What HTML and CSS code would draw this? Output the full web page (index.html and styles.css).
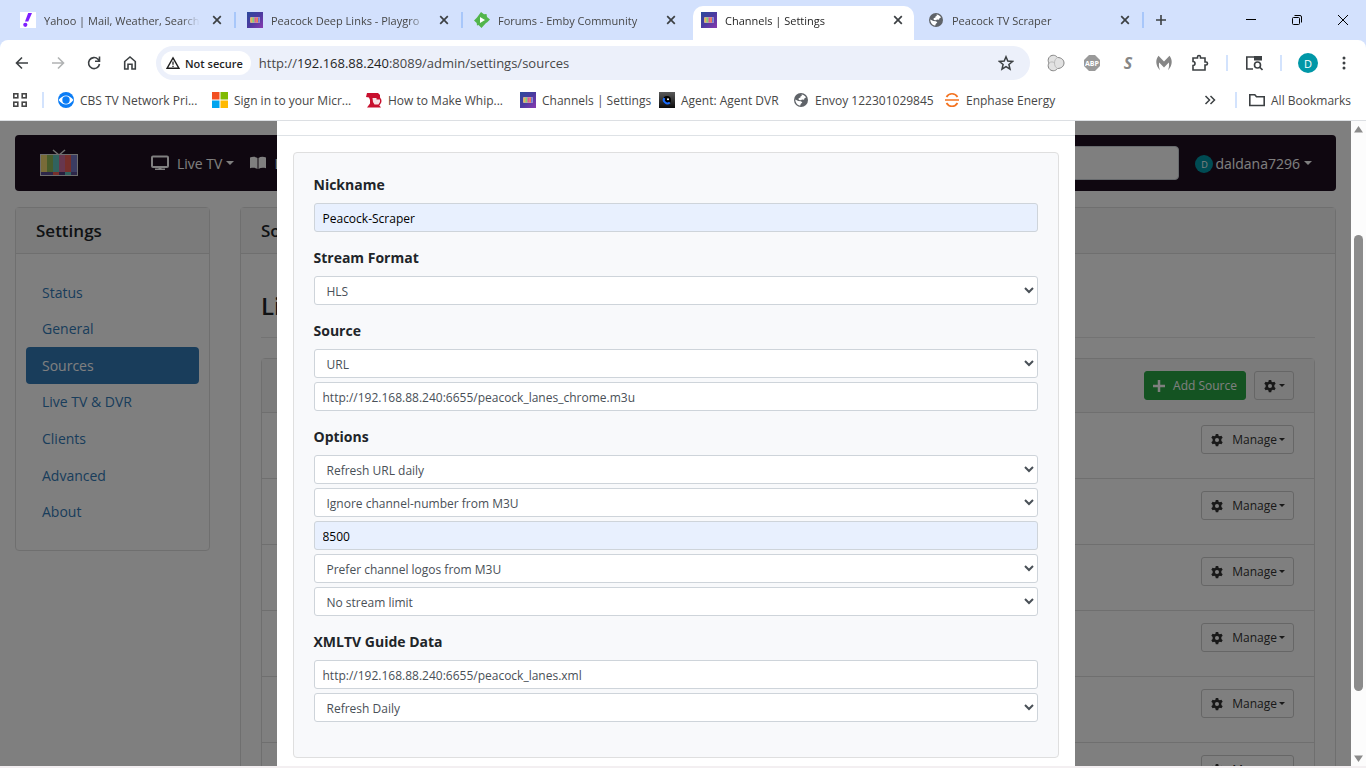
FILE: index.html
```html
<!DOCTYPE html>
<html lang="en">
<head>
    <meta charset="UTF-8">
    <meta name="viewport" content="width=device-width, initial-scale=1.0">
    <title>Channels | Settings</title>
    <link rel="stylesheet" href="styles.css">
</head>
<body>
    <!-- shared icons -->
    <svg class="defs" width="0" height="0">
        <defs>
            <linearGradient id="purple" x1="0" y1="0" x2="1" y2="1">
                <stop offset="0" stop-color="#2b4a9c"/>
                <stop offset="0.5" stop-color="#4b3aa0"/>
                <stop offset="1" stop-color="#8a3ab0"/>
            </linearGradient>
            <linearGradient id="dark" x1="0" y1="0" x2="0" y2="1">
                <stop offset="0" stop-color="#5a5a5a"/>
                <stop offset="1" stop-color="#0c0c0c"/>
            </linearGradient>
        </defs>
        <symbol id="channels" viewBox="0 0 16 16">
            <rect width="16" height="16" fill="url(#purple)"/>
            <rect x="3" y="5" width="10" height="6" rx="1" fill="#b9a3c9"/>
            <path d="M3.500 5.500h2v5h-2z" fill="#e8b84a"/>
            <path d="M5.500 5.500h2v5h-2z" fill="#7fd07a"/>
            <path d="M7.500 5.500h2v5h-2z" fill="#e05a90"/>
            <path d="M9.500 5.500h1.500v5h-1.500z" fill="#f07a50"/>
            <path d="M11 5.500h1.500v5h-1.500z" fill="#6a78d8"/>
        </symbol>
        <symbol id="globe" viewBox="0 0 16 16">
            <circle cx="8" cy="8" r="7" fill="#5f6368"/>
            <path d="M8.500 2.500c2 .2 3.600 1.300 4.500 3l-1.500.8-.5 1.500-2-.4-1 .8-2.200-.3-.2-1.700 1.800-.7.200-1.200 1.200-.4zM2.300 7.500l3 1.500 2.700.2 1.300 1.300-1.600 1.400-.4 1.700c-2.800-.3-5-2.900-5-6.100z" fill="#fff"/>
        </symbol>
        <symbol id="x" viewBox="0 0 10 10">
            <path d="M1.200 1.200l7.600 7.600M8.800 1.200L1.200 8.800" stroke="currentColor" stroke-width="1.700"/>
        </symbol>
        <symbol id="gear" viewBox="0 0 16 16">
            <path fill="currentColor" fill-rule="evenodd" d="M6.600 1h2.800l.4 2 1.400.8 1.900-.7 1.400 2.400-1.500 1.300v2.400l1.500 1.300-1.400 2.400-1.900-.7-1.400.8-.4 2H6.600l-.4-2-1.400-.8-1.900.7-1.400-2.400L3 9.200V6.800L1.500 5.500l1.400-2.400 1.900.7L6.200 3zM8 5.700a2.300 2.300 0 1 0 0 4.600 2.300 2.300 0 0 0 0-4.600z"/>
        </symbol>
    </svg>

    <header class="browser">
        <div class="tabs">
            <div class="tab">
                <svg class="icon" viewBox="0 0 16 16"><rect width="16" height="16" fill="#fff"/><path d="M8.200 1H12L8.300 9.500H5z" fill="#7e1fff"/><circle cx="5.300" cy="12.800" r="2.100" fill="#7e1fff"/></svg>
                <span class="title">Yahoo | Mail, Weather, Search</span>
                <button class="close" aria-label="Close tab"><svg><use href="#x"/></svg></button>
            </div>
            <div class="tab">
                <svg class="icon"><use href="#channels"/></svg>
                <span class="title">Peacock Deep Links - Playgro</span>
                <button class="close" aria-label="Close tab"><svg><use href="#x"/></svg></button>
            </div>
            <div class="tab no-line">
                <svg class="icon" viewBox="0 0 16 16"><path d="M7 0l3 2.200L12.500 2 13 5l3 2.500-3 3-1 .5-4.500 5-3-3L3 13.500 2.700 11 0 8.500l3-3z" fill="#52b54b"/><path d="M6 5v6l5-3z" fill="#fff"/></svg>
                <span class="title">Forums - Emby Community</span>
                <button class="close" aria-label="Close tab"><svg><use href="#x"/></svg></button>
            </div>
            <div class="tab active no-line">
                <svg class="icon"><use href="#channels"/></svg>
                <span class="title">Channels | Settings</span>
                <button class="close" aria-label="Close tab"><svg><use href="#x"/></svg></button>
            </div>
            <div class="tab">
                <svg class="icon"><use href="#globe"/></svg>
                <span class="title">Peacock TV Scraper</span>
                <button class="close" aria-label="Close tab"><svg><use href="#x"/></svg></button>
            </div>
            <button class="new-tab" aria-label="New tab"><svg width="12" height="12" viewBox="0 0 12 12"><path d="M6 1v10M1 6h10" stroke="#3c4043" stroke-width="1.600"/></svg></button>
            <div class="window-buttons">
                <button aria-label="Minimize"><svg width="10" height="10" viewBox="0 0 10 10"><path d="M0 4.500h10" stroke="#000"/></svg></button>
                <button aria-label="Restore"><svg width="10" height="10" viewBox="0 0 10 10"><g fill="none" stroke="#000"><rect x=".5" y="2.500" width="7" height="7" rx="1"/><path d="M2.500.5H8A1.500 1.500 0 0 1 9.500 2v5.500"/></g></svg></button>
                <button aria-label="Close"><svg width="10" height="10" viewBox="0 0 10 10"><path d="M0 0l10 10M10 0L0 10" stroke="#000"/></svg></button>
            </div>
        </div>

        <div class="toolbar">
            <button aria-label="Back"><svg width="16" height="16" viewBox="0 0 16 16"><path d="M14 8H3M8 2.500L2.500 8 8 13.500" class="line"/></svg></button>
            <button class="faded" aria-label="Forward"><svg width="16" height="16" viewBox="0 0 16 16"><path d="M2 8h11M8 2.500L13.500 8 8 13.500" class="line"/></svg></button>
            <button aria-label="Reload"><svg width="16" height="16" viewBox="0 0 16 16"><path d="M13.500 9A5.500 5.500 0 1 1 12 4.200l1.500 1.500M13.500 1.500v4.700H9" class="line"/></svg></button>
            <button aria-label="Home"><svg width="16" height="16" viewBox="0 0 16 16"><path d="M2.700 6.500L8 2l5.300 4.500V14H10V9.300H6V14H2.700z" class="line"/></svg></button>
            <div class="address">
                <span class="chip"><svg width="14" height="14" viewBox="0 0 14 14"><path d="M7 1.800L13 12.300H1z" fill="none" stroke="#1f1f1f" stroke-width="1.400"/><path d="M7 5.500v3.300M7 9.700v1.400" stroke="#1f1f1f" stroke-width="1.300"/></svg>Not secure</span>
                <span class="url">http://<b>192.168.88.240</b>:8089/admin/settings/sources</span>
                <button class="star" aria-label="Bookmark this tab"><svg width="16" height="16" viewBox="0 0 16 16"><path d="M8 1.800l1.800 4.300 4.700.4-3.600 3 1.100 4.600L8 11.600l-4 2.500 1.100-4.600-3.600-3 4.700-.4z" fill="none" stroke="#3c4043" stroke-width="1.500"/></svg></button>
            </div>
            <button aria-label="Extension"><svg width="18" height="18" viewBox="0 0 18 18"><path d="M2 3.500C4 .5 8.500.5 10.500 3.500c4 0 6.500 2.500 6.500 5.500s-2.500 5.500-6.500 5.500C8.500 17.500 4 17.500 2 14.500.8 12.500 1 10.500 2 9 1 7.500.8 5.500 2 3.500z" fill="#e2e2e2" stroke="#858585"/><path d="M2 9c2-1.500 4-1.500 5.500 0M10.500 3.500C8.500 4.500 7.500 6.500 7.500 9s1 4.500 3 5.500" fill="none" stroke="#bbb"/></svg></button>
            <button aria-label="Adblock Plus"><svg width="16" height="16" viewBox="0 0 16 16"><path d="M5 0h6l5 5v6l-5 5H5l-5-5V5z" fill="#9a9a9a"/><text x="8" y="11" class="abp">ABP</text></svg></button>
            <button class="s-icon" aria-label="Extension">S</button>
            <button aria-label="Malwarebytes"><svg width="16" height="16" viewBox="0 0 16 16"><path d="M2.500.8L8 6.500 13.500.8C16.800 5 16.500 10.500 12 15.200c1.200-3 1.300-5.500.8-7.700L8 12.500 3.200 7.500c-.5 2.200-.4 4.700.8 7.700C-.5 10.500-.8 5 2.500.8z" fill="#868686"/></svg></button>
            <button aria-label="Extensions"><svg width="18" height="18" viewBox="0 0 18 18"><path d="M2 4h4.500V3a1.500 1.500 0 0 1 3 0v1H14v4h1a1.500 1.500 0 0 1 0 3h-1v5H2v-4.500a2 2 0 0 0 0-4z" class="line"/></svg></button>
            <span class="divider"></span>
            <button aria-label="Search tabs"><svg width="18" height="18" viewBox="0 0 18 18"><path d="M8 15H1.800V3H16" class="line"/><path d="M9 2h8v4.500H9z" fill="#3c4043"/><circle cx="12.500" cy="11" r="3" class="line"/><path d="M14.700 13.200L17.500 16" class="line"/></svg></button>
            <span class="divider"></span>
            <button aria-label="Profile"><span class="avatar">D</span></button>
            <button aria-label="Menu"><svg width="4" height="14" viewBox="0 0 4 14"><g fill="#3c4043"><circle cx="2" cy="2" r="1.500"/><circle cx="2" cy="7" r="1.500"/><circle cx="2" cy="12" r="1.500"/></g></svg></button>
        </div>

        <nav class="bookmarks">
            <button class="apps" aria-label="Apps"><svg width="14" height="14" viewBox="0 0 14 14"><g fill="none" stroke="#474747" stroke-width="1.600"><rect x=".8" y=".8" width="4" height="4"/><rect x="9.200" y=".8" width="4" height="4"/><rect x=".8" y="9.200" width="4" height="4"/><rect x="9.200" y="9.200" width="4" height="4"/></g></svg></button>
            <div class="bookmark-list">
                <a href="#"><svg class="icon" viewBox="0 0 16 16"><circle cx="8" cy="8" r="8" fill="#0a7cf5"/><path d="M.5 8Q8-1 15.500 8 8 17 .5 8z" fill="#fff"/><circle cx="8" cy="8" r="3.700" fill="#0a7cf5"/></svg>CBS TV Network Pri...</a>
                <a href="#"><svg class="icon" viewBox="0 0 16 16"><path d="M0 0h7.500v7.500H0z" fill="#f25022"/><path d="M8.500 0H16v7.500H8.500z" fill="#7fba00"/><path d="M0 8.500h7.500V16H0z" fill="#00a4ef"/><path d="M8.500 8.500H16V16H8.500z" fill="#ffb900"/></svg>Sign in to your Micr...</a>
                <a href="#"><svg class="icon" viewBox="0 0 16 16"><path d="M1 1h11l2 2v3l-2 1.500v4l3 4H1l3-4V8L3 5.500 0 5z" fill="#c8102e"/><circle cx="11" cy="9" r="4.500" fill="#c8102e"/><path d="M6.500 6h4v1.500h3.500v2.500l-1.500 2.500h-4L7 10z" fill="#f7e1e4"/></svg>How to Make Whip...</a>
                <a href="#"><svg class="icon"><use href="#channels"/></svg>Channels | Settings</a>
                <a href="#"><svg class="icon" viewBox="0 0 16 16"><rect width="16" height="16" fill="url(#dark)"/><circle cx="8" cy="8" r="4" fill="#000"/><path d="M5.300 6a3.600 3.600 0 0 0 5.500 4.500" fill="none" stroke="#1a6dff" stroke-width="2"/><circle cx="9" cy="7.300" r="1" fill="#fff"/></svg>Agent: Agent DVR</a>
                <a href="#"><svg class="icon"><use href="#globe"/></svg>Envoy 122301029845</a>
                <a href="#"><svg class="icon" viewBox="0 0 16 16"><path d="M2.500 5a6.300 6.300 0 0 1 11 0M2.500 11a6.300 6.300 0 0 0 11 0M1 8h14" fill="none" stroke="#f37321" stroke-width="1.700"/></svg>Enphase Energy</a>
            </div>
            <button class="more" aria-label="More bookmarks"><svg width="12" height="10" viewBox="0 0 12 10"><path d="M1.500 1l4 4-4 4M6.500 1l4 4-4 4" fill="none" stroke="#3c4043" stroke-width="1.500"/></svg></button>
            <a class="all" href="#"><svg class="icon" viewBox="0 0 16 16"><path d="M.8 2.800h5l1.700 2h7.700v8.700H.8z" class="line"/></svg>All Bookmarks</a>
        </nav>
    </header>

    <div class="viewport">
        <div class="page">
            <nav class="navbar">
                <svg class="logo" width="40" height="28" viewBox="0 0 40 28">
                    <path d="M14 1l6 5 6-5" fill="none" stroke="#ddd" stroke-width="1.500"/>
                    <rect x="1" y="5" width="38" height="22" fill="#ddd"/>
                    <path d="M2 6h6v17H2z" fill="#f1d671"/><path d="M8 6h6v17H8z" fill="#8fb857"/><path d="M14 6h6v17h-6z" fill="#62c4bd"/><path d="M20 6h6v17h-6z" fill="#cf6f9c"/><path d="M26 6h6v17h-6z" fill="#ed5f55"/><path d="M32 6h6v17h-6z" fill="#7678c4"/>
                    <path d="M2 23h12v3H2z" fill="#5b4f93"/><path d="M14 23h6v3h-6z" fill="#ed5f55"/><path d="M20 23h6v3h-6z" fill="#4c3d7d"/><path d="M26 23h6v3h-6z" fill="#62c4bd"/><path d="M32 23h6v3h-6z" fill="#5b4f93"/>
                </svg>
                <a href="#" class="live"><svg width="18" height="16" viewBox="0 0 18 16"><rect x="1" y="1.500" width="16" height="10.500" rx="1" fill="none" stroke="currentColor" stroke-width="2"/><path d="M7.500 12h3v1.500h3.500v1.500H4v-1.500h3.500z" fill="currentColor"/></svg><span class="caret">Live TV</span></a>
                <a href="#"><svg width="16" height="14" viewBox="1 0 16 14"><path d="M1 1.500C4 .5 6.500.7 8.500 2v11c-2-1.200-4.500-1.500-7.500-.7zM17 1.500C14 .5 11.500.7 9.500 2v11c2-1.200 4.500-1.500 7.500-.7z" fill="currentColor"/></svg><span class="caret">Library</span></a>
                <input class="search" type="text" aria-label="Search">
                <a href="#" class="user"><span class="avatar">D</span><span class="caret">daldana7296</span></a>
            </nav>

            <div class="columns">
                <aside class="card">
                    <h2 class="card-header">Settings</h2>
                    <nav class="menu">
                        <a href="#">Status</a>
                        <a href="#">General</a>
                        <a href="#" class="selected">Sources</a>
                        <a href="#">Live TV &amp; DVR</a>
                        <a href="#">Clients</a>
                        <a href="#">Advanced</a>
                        <a href="#">About</a>
                    </nav>
                </aside>
                <main class="card">
                    <h2 class="card-header">Sources</h2>
                    <div class="content">
                        <h3>Live TV Sources</h3>
                        <div class="card">
                            <div class="row row-header">
                                <button class="btn btn-add"><svg width="12" height="12" viewBox="0 0 12 12"><path d="M6 0v12M0 6h12" stroke="currentColor" stroke-width="2.500"/></svg>Add Source</button>
                                <button class="btn btn-small" aria-label="Source options"><svg width="14" height="14"><use href="#gear"/></svg><span class="caret"></span></button>
                            </div>
                            <div class="row"><button class="btn"><svg width="14" height="14"><use href="#gear"/></svg><span class="caret">Manage</span></button></div>
                            <div class="row"><button class="btn"><svg width="14" height="14"><use href="#gear"/></svg><span class="caret">Manage</span></button></div>
                            <div class="row"><button class="btn"><svg width="14" height="14"><use href="#gear"/></svg><span class="caret">Manage</span></button></div>
                            <div class="row"><button class="btn"><svg width="14" height="14"><use href="#gear"/></svg><span class="caret">Manage</span></button></div>
                            <div class="row"><button class="btn"><svg width="14" height="14"><use href="#gear"/></svg><span class="caret">Manage</span></button></div>
                            <div class="row"><button class="btn"><svg width="14" height="14"><use href="#gear"/></svg><span class="caret">Manage</span></button></div>
                        </div>
                    </div>
                </main>
            </div>

            <div class="backdrop">
                <div class="modal" role="dialog" aria-label="Edit source">
                    <div class="modal-header"></div>
                    <form class="source-form">
                        <div class="group">
                            <label for="nickname">Nickname</label>
                            <input type="text" id="nickname" class="filled" value="Peacock-Scraper">
                        </div>
                        <div class="group">
                            <label for="format">Stream Format</label>
                            <select id="format"><option>HLS</option></select>
                        </div>
                        <div class="group">
                            <label for="source">Source</label>
                            <select id="source"><option>URL</option></select>
                            <input type="text" aria-label="Source URL" value="http://192.168.88.240:6655/peacock_lanes_chrome.m3u">
                        </div>
                        <div class="group">
                            <label for="refresh">Options</label>
                            <select id="refresh"><option>Refresh URL daily</option></select>
                            <select aria-label="Channel numbers"><option>Ignore channel-number from M3U</option></select>
                            <input type="text" aria-label="First channel number" class="filled" value="8500">
                            <select aria-label="Channel logos"><option>Prefer channel logos from M3U</option></select>
                            <select aria-label="Stream limit"><option>No stream limit</option></select>
                        </div>
                        <div class="group">
                            <label for="xmltv">XMLTV Guide Data</label>
                            <input type="text" id="xmltv" value="http://192.168.88.240:6655/peacock_lanes.xml">
                            <select aria-label="Guide refresh"><option>Refresh Daily</option></select>
                        </div>
                    </form>
                </div>
            </div>
        </div>

        <div class="scrollbar">
            <svg width="9" height="7" viewBox="0 0 9 7"><path d="M4.500 0L9 6.500H0z" fill="#8b8b8b"/></svg>
            <div class="thumb"></div>
            <svg width="9" height="7" viewBox="0 0 9 7"><path d="M4.500 7L9 .5H0z" fill="#8b8b8b"/></svg>
        </div>
    </div>
</body>
</html>
```
FILE: styles.css
```css
* {
    box-sizing: border-box;
}
body {
    margin: 0;
    height: 100vh;
    display: flex;
    flex-direction: column;
    overflow: hidden;
    padding-bottom: 2px;
    background: #f3eff1;
    font-family: "Open Sans", "Noto Sans", sans-serif;
    font-size: 14px;
    color: #212529;
}
button {
    font-family: inherit;
    border: none;
    background: none;
    padding: 0;
    display: flex;
    align-items: center;
    justify-content: center;
}
a {
    text-decoration: none;
}
svg {
    flex: none;
}
.defs {
    position: absolute;
}
.icon {
    width: 16px;
    height: 16px;
}
.line {
    fill: none;
    stroke: #3c4043;
    stroke-width: 1.6;
}

/* browser window */
.browser {
    flex: none;
    background: #d3e1fd;
    border-bottom: 1px solid #dcdfe3;
    color: #474747;
    font-size: 12px;
}
.tabs {
    display: flex;
    height: 40px;
    padding-left: 9px;
}
.tab {
    position: relative;
    display: flex;
    align-items: center;
    flex: 0 1 227px;
    min-width: 0;
    gap: 8px;
    padding: 0 14px 0 11px;
}
.tab::after {
    content: "";
    position: absolute;
    right: 0;
    top: 12px;
    width: 2px;
    height: 16px;
    background: #a8c7fa;
}
.tab.no-line::after {
    display: none;
}
.tab .title {
    flex: 1;
    overflow: hidden;
    white-space: nowrap;
    font-size: 11px;
    mask-image: linear-gradient(to right, #000 88%, transparent);
}
.tab .close {
    width: 10px;
    margin-left: 4px;
    color: #3c4043;
}
.tab .close svg {
    width: 10px;
    height: 10px;
}
.tab.active {
    color: #1f1f1f;
    z-index: 0;
}
.tab.active::before {
    content: "";
    position: absolute;
    z-index: -1;
    inset: 6px 3px 0;
    background: #fff;
    border-radius: 10px 10px 0 0;
}
.new-tab {
    width: 34px;
}
.window-buttons {
    display: flex;
    margin-left: auto;
}
.window-buttons button {
    width: 46px;
}
.toolbar {
    display: flex;
    align-items: center;
    height: 46px;
    padding: 0 4px;
    background: #fff;
    border-radius: 8px 8px 0 0;
}
.toolbar > button {
    width: 36px;
    height: 36px;
}
.faded {
    opacity: 0.4;
}
.address {
    flex: 1;
    display: flex;
    align-items: center;
    height: 34px;
    margin: 0 8px;
    padding: 0 16px 0 5px;
    border-radius: 17px;
    background: #ecf0fa;
}
.chip {
    display: flex;
    align-items: center;
    gap: 5px;
    height: 24px;
    padding: 0 8px 0 5px;
    margin-right: 8px;
    border-radius: 12px;
    background: #fff;
    color: #1f1f1f;
    font-size: 11px;
    font-weight: 600;
}
.url {
    font-size: 13px;
}
.url b {
    font-weight: normal;
    color: #1f1f1f;
}
.star {
    margin-left: auto;
}
.abp {
    font-size: 7px;
    font-weight: bold;
    fill: #fff;
    text-anchor: middle;
}
.s-icon {
    font-size: 16px;
    font-style: italic;
    font-weight: bold;
    color: #868686;
}
.divider {
    width: 2px;
    height: 16px;
    margin: 0 8px;
    background: #d3e3fd;
}
.avatar {
    display: flex;
    align-items: center;
    justify-content: center;
    width: 20px;
    height: 20px;
    border-radius: 50%;
    background: #0097a7;
    color: #fff;
    font-size: 11px;
}
.bookmarks {
    display: flex;
    align-items: center;
    height: 34px;
    padding: 0 15px 6px 13px;
    background: #fff;
}
.bookmarks a {
    display: flex;
    align-items: center;
    gap: 6px;
    white-space: nowrap;
    color: #474747;
}
.apps {
    height: 16px;
    padding-right: 15px;
    border-right: 2px solid #d3e3fd;
}
.bookmark-list {
    display: grid;
    grid-template-columns: 154px 154px 154px 139px 134px 151px auto;
    padding-left: 14px;
}
.more {
    height: 16px;
    margin-left: auto;
    padding-right: 19px;
    border-right: 2px solid #d3e3fd;
}
.bookmarks .all {
    padding-left: 12px;
}

/* page */
.viewport {
    flex: 1;
    display: flex;
    min-height: 0;
}
.page {
    position: relative;
    flex: 1;
    overflow: hidden;
    padding: 14px 15px;
    background: #fff;
}
.navbar {
    display: flex;
    align-items: center;
    height: 56px;
    padding: 0 24px;
    border-radius: 4px;
    background: #1e0e20;
}
.navbar a {
    display: flex;
    align-items: center;
    gap: 8px;
    margin-right: 16px;
    color: #fff;
}
.navbar .live {
    margin-left: 72px;
}
.search {
    width: 260px;
    height: 34px;
    margin-left: auto;
    border: 1px solid #ced4da;
    border-radius: 4px;
}
.navbar .user {
    gap: 2px;
    margin: 0 0 0 16px;
}
.user .avatar {
    width: 18px;
    height: 18px;
    font-size: 9px;
    margin-top: 2px;
}
.caret {
    display: flex;
    align-items: center;
}
.caret::after {
    content: "";
    margin-left: 4px;
    border: 4px solid transparent;
    border-top-color: currentColor;
    border-bottom: 0;
}
.columns {
    display: grid;
    grid-template-columns: 195px 1fr;
    gap: 30px;
    align-items: start;
    margin-top: 16px;
}
.card {
    border: 1px solid #dfdfdf;
    border-radius: 4px;
}
.card-header {
    margin: 0;
    padding: 0 20px;
    height: 46px;
    line-height: 46px;
    font-size: 17px;
    font-weight: 600;
    background: #f7f7f7;
    border-bottom: 1px solid #dfdfdf;
}
.menu {
    display: grid;
    grid-auto-rows: 1fr;
    min-height: 296px;
    padding: 20px 10px;
}
.menu a {
    display: flex;
    align-items: center;
    padding: 0 16px;
    border-radius: 4px;
    color: #337ab7;
}
.menu .selected {
    background: #337ab7;
    color: #fff;
}
.content {
    padding: 32px 20px;
}
.content h3 {
    margin: 0 0 20px;
    padding-bottom: 11px;
    border-bottom: 1px solid #e6e6e6;
    font-size: 24px;
    line-height: 40px;
    font-weight: 600;
}
.row {
    display: flex;
    justify-content: flex-end;
    align-items: flex-start;
    gap: 8px;
    height: 66px;
    padding: 12px 20px;
    border-bottom: 1px solid #dfdfdf;
}
.row-header {
    height: 54px;
    background: #f7f7f7;
}
.btn {
    height: 29px;
    padding: 0 8px;
    gap: 8px;
    border: 1px solid #ccc;
    border-radius: 3px;
    font-size: 12px;
    color: #333;
}
.btn .caret::after {
    margin-left: 2px;
    border-width: 3px;
    border-bottom: 0;
}
.btn-small {
    gap: 0;
}
.btn-add {
    border-color: #28a745;
    background: #28a745;
    color: #fff;
}

/* edit dialog */
.backdrop {
    position: absolute;
    inset: 0;
    display: flex;
    justify-content: center;
    background: rgba(0, 0, 0, 0.5);
}
.modal {
    width: 100%;
    max-width: 798px;
    background: #fff;
}
.modal-header {
    height: 15px;
    border-bottom: 1px solid #dee2e6;
}
.source-form {
    margin: 16px;
    padding: 22px 20px 19px;
    border: 1px solid #dfdfdf;
    border-radius: 4px;
    background: #f8f9fb;
}
.group {
    display: flex;
    flex-direction: column;
    gap: 4px;
    margin-bottom: 16px;
}
.group label {
    margin-bottom: 4px;
    line-height: 20px;
    font-weight: bold;
}
.group input,
.group select {
    width: 100%;
    height: 29px;
    padding: 5px 8px 4px;
    border: 1px solid #ced4da;
    border-radius: 3px;
    background: #fff;
    font-family: inherit;
    font-size: 12px;
    color: #495057;
}
.group .filled {
    background: #e8f0fe;
    color: #000;
}

/* scrollbar */
.scrollbar {
    display: flex;
    flex-direction: column;
    align-items: center;
    width: 15px;
    padding: 5px 0 4px;
    background: #fcfcfc;
}
.thumb {
    width: 9px;
    height: 456px;
    margin: 102px 0 auto;
    border-radius: 5px;
    background: #8b8b8b;
}
```
